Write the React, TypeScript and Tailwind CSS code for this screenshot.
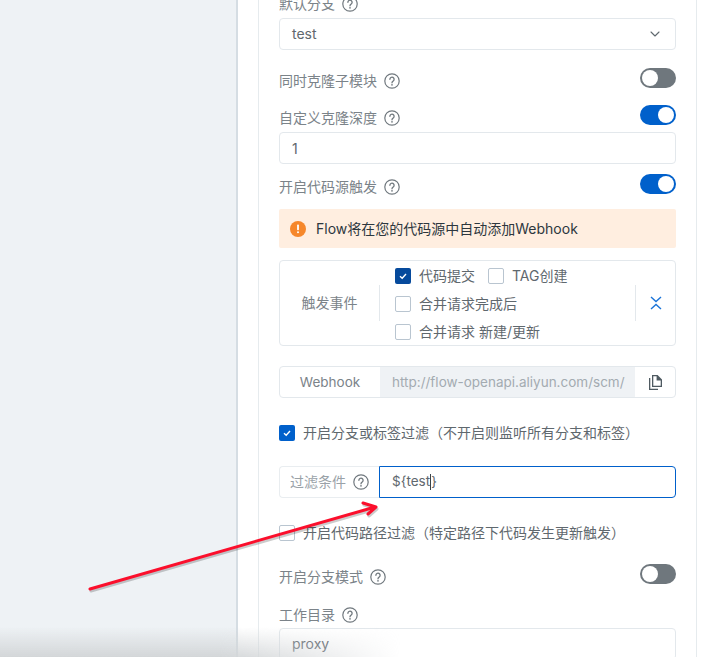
import { ChevronDown } from "lucide-react";

const FONT = "font-['Inter','Noto_Sans_CJK_SC',sans-serif]";

function Help() {
  return (
    <svg viewBox="0 0 16 16" className="h-4 w-4 shrink-0 text-[#70787e]" fill="none">
      <circle cx="8" cy="8" r="7.2" stroke="currentColor" strokeWidth="1.2" />
      <path d="M5.9 6.3a2.1 2.1 0 1 1 3.3 1.7c-.7.5-1.2.9-1.2 1.8" stroke="currentColor" strokeWidth="1.3" strokeLinecap="round" />
      <circle cx="8" cy="11.8" r=".85" fill="currentColor" />
    </svg>
  );
}

function Label({ text, className = "" }: { text: string; className?: string }) {
  return (
    <div className={`flex items-center gap-[7px] text-sm leading-5 text-[#7b8389] ${className}`}>
      <span>{text}</span>
      <Help />
    </div>
  );
}

function Toggle({ on = false }: { on?: boolean }) {
  return (
    <div className={`flex h-5 w-9 items-center rounded-full px-0.5 ${on ? "justify-end bg-[#0060cb]" : "justify-start bg-[#6f777d]"}`}>
      <div className="h-4 w-4 rounded-full bg-white" />
    </div>
  );
}

function Check({ on = false, dark = false }: { on?: boolean; dark?: boolean }) {
  if (!on) return <div className="h-4 w-4 shrink-0 rounded-[2px] border border-[#b9c5d0] bg-white" />;
  return (
    <div className={`flex h-4 w-4 shrink-0 items-center justify-center rounded-[2px] ${dark ? "bg-[#064a9c]" : "bg-[#0060cb]"}`}>
      <svg viewBox="0 0 10 10" className="h-2.5 w-2.5" fill="none">
        <path d="M2 5.2 4.2 7.2 8 3" stroke="white" strokeWidth="1.4" />
      </svg>
    </div>
  );
}

function Option({ text, on = false }: { text: string; on?: boolean }) {
  return (
    <div className="flex items-center gap-2 text-sm leading-5 text-[#5f686e]">
      <Check on={on} dark />
      <span>{text}</span>
    </div>
  );
}

export default function App() {
  return (
    <div className={`relative flex h-[657px] w-[707px] overflow-hidden bg-white ${FONT}`}>
      <aside className="w-[238px] shrink-0 border-r-2 border-[#d5dde3] bg-[#eef2f5]" />

      <div className="ml-5 w-[439px] shrink-0 border-x border-[#e6ebee] bg-white px-5">
        <div className="-mt-[6px]">
          <Label text="默认分支" />
          <div className="mt-[4px] flex h-8 items-center justify-between rounded border border-[#e3e8ec] pl-3 pr-3 text-sm text-[#5f686e]">
            <span>test</span>
            <ChevronDown className="h-4 w-4 text-[#5f686e]" strokeWidth={1.6} />
          </div>

          <div className="mt-[18px] flex items-start justify-between">
            <Label text="同时克隆子模块" className="mt-[3px]" />
            <Toggle />
          </div>

          <div className="mt-[14px] flex items-start justify-between">
            <Label text="自定义克隆深度" className="mt-[3px]" />
            <Toggle on />
          </div>
          <div className="mt-[4px] flex h-8 items-center rounded border border-[#e3e8ec] px-3 pt-0.5 text-sm text-[#5f686e]">1</div>

          <div className="mt-2.5 flex items-start justify-between">
            <Label text="开启代码源触发" className="mt-[3px]" />
            <Toggle on />
          </div>

          <div className="mt-3 flex h-[39px] items-center gap-2.5 rounded-[2px] bg-[#ffeee0] px-[11px] text-sm text-[#2d373e]">
            <svg viewBox="0 0 16 16" className="h-4 w-4 shrink-0">
              <circle cx="8" cy="8" r="8" fill="#f6872b" />
              <rect x="7.1" y="3.6" width="1.8" height="5.6" rx=".6" fill="white" />
              <circle cx="8" cy="11.3" r="1" fill="white" />
            </svg>
            <span>Flow将在您的代码源中自动添加Webhook</span>
          </div>

          <div className="mt-3 flex h-[86px] items-center rounded border border-[#e3e8ec]">
            <div className="w-[100px] shrink-0 border-r border-[#e3e8ec] py-[9px] text-center text-sm leading-[18px] text-[#7b8389]">
              触发事件
            </div>
            <div className="flex flex-1 flex-col gap-2 pl-[15px] pt-0.5">
              <div className="flex gap-[13px]">
                <Option text="代码提交" on />
                <Option text="TAG创建" />
              </div>
              <Option text="合并请求完成后" />
              <Option text="合并请求 新建/更新" />
            </div>
            <div className="flex h-9 w-10 shrink-0 items-center justify-center border-l border-[#e3e8ec]">
              <svg viewBox="0 0 12 14" className="h-3.5 w-3 text-[#1b74d8]" fill="none" stroke="currentColor" strokeWidth="1.4">
                <path d="M1 1 6 5.5 11 1M1 13 6 8.5 11 13" />
              </svg>
            </div>
          </div>

          <div className="mt-5 flex h-8 items-stretch overflow-hidden rounded border border-[#e3e8ec] text-[13.5px]">
            <div className="flex w-[100px] shrink-0 items-center justify-center text-[#7b8389]">Webhook</div>
            <div className="flex flex-1 items-center overflow-hidden whitespace-nowrap bg-[#eff2f5] pl-3 text-[#a3abb1]">
              http://flow-openapi.aliyun.com/scm/
            </div>
            <div className="flex w-10 shrink-0 items-center justify-center text-[#4f5a61]">
              <svg viewBox="0 0 16 16" className="h-4 w-4" fill="currentColor">
                <path fillRule="evenodd" d="M5 1h5.6L15 5.4V13H5V1Zm1.3 1.3v9.4h7.4V6.5H9.6V2.3H6.3Z" />
                <path d="M2 4h1.3v10.7H11V16H2V4Z" />
              </svg>
            </div>
          </div>

          <div className="mt-[25px] flex items-center gap-2 text-sm leading-5 text-[#5f686e]">
            <Check on />
            <span>开启分支或标签过滤（不开启则监听所有分支和标签）</span>
          </div>

          <div className="mt-[23px] flex h-8 items-stretch text-sm">
            <div className="flex w-[100px] shrink-0 items-center gap-[7px] rounded-l border-y border-l border-[#e9edf0] pl-[10px] text-[#9aa2a8]">
              <span>过滤条件</span>
              <Help />
            </div>
            <div className="flex flex-1 items-center rounded-r border border-[#0060cb] pl-3 text-[13.5px] text-[#5f686e]">
              <span>{"${test"}</span>
              <span className="h-4 w-px bg-[#39434a]" />
              <span>{"}"}</span>
            </div>
          </div>

          <div className="mt-[25px] flex items-center gap-2 text-sm leading-5 text-[#5f686e]">
            <Check />
            <span>开启代码路径过滤（特定路径下代码发生更新触发）</span>
          </div>

          <div className="mt-[21px] flex items-start justify-between">
            <Label text="开启分支模式" className="mt-[3px]" />
            <Toggle />
          </div>

          <Label text="工作目录" className="mt-[18px]" />
          <div className="mt-[3px] flex h-8 items-center rounded border border-[#e3e8ec] px-3 text-sm text-[#5f686e]">proxy</div>
        </div>
      </div>

      {/* screenshot edge shadow */}
      <div className="pointer-events-none absolute bottom-0 left-0 h-[30px] w-[400px] bg-gradient-to-t from-[#d3d6d8] to-transparent [mask-image:linear-gradient(to_right,black_55%,transparent)]" />

      {/* red annotation arrow */}
      <svg viewBox="0 0 707 657" className="pointer-events-none absolute left-0 top-0 h-[657px] w-[707px]" fill="none">
        <g stroke="#000" strokeOpacity=".2" strokeWidth="3" strokeLinecap="round" strokeLinejoin="round" transform="translate(1 2)">
          <path d="M90 589 375 507M363 503 376 507 368 514" />
        </g>
        <g stroke="#fb0f2c" strokeWidth="3" strokeLinecap="round" strokeLinejoin="round">
          <path d="M90 589 375 507M363 503 376 507 368 514" />
        </g>
      </svg>
    </div>
  );
}
